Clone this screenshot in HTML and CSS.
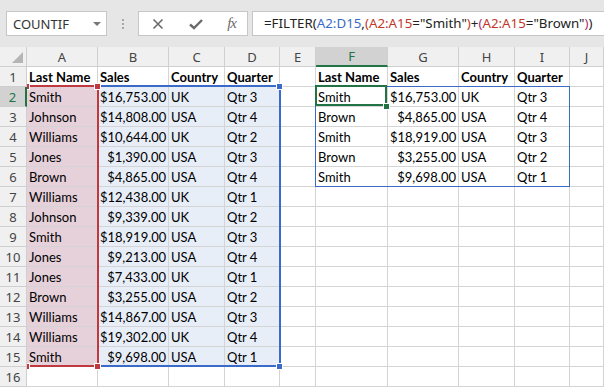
FILE: index.html
```html
<!DOCTYPE html>
<html>
<head>
<meta charset="utf-8">
<link rel="stylesheet" href="styles.css">
</head>
<body>
<div class="toolbar">
  <div class="namebox"><span class="nb-text">COUNTIF</span><span class="nb-arrow"></span></div>
  <div class="grip"><i></i><i></i><i></i></div>
  <div class="fxbox">
    <svg class="ico" width="14" height="14" viewBox="0 0 14 14"><path d="M2.5 2.5 L11.5 11.5 M11.5 2.5 L2.5 11.5" stroke="#6b6b6b" stroke-width="1.6" fill="none"/></svg>
    <svg class="ico" width="16" height="14" viewBox="0 0 16 14"><path d="M2 7.5 L6 11 L14 3" stroke="#6b6b6b" stroke-width="2.4" fill="none"/></svg>
    <span class="fx">fx</span>
  </div>
  <div class="formula"><span>=FILTER(</span><span class="fb">A2:D15</span><span>,</span><span class="fr">(A2:A15</span><span>="Smith"</span><span class="fr">)</span><span>+</span><span class="fp">(</span><span class="fr">A2:A15</span><span>="Brown"</span><span class="fp">)</span><span>)</span></div>
</div>
<div class="sheet">
  <div class="corner"><span class="tri"></span></div>
  <div class="ch">A</div><div class="ch">B</div><div class="ch">C</div><div class="ch">D</div><div class="ch">E</div><div class="ch sel">F</div><div class="ch">G</div><div class="ch">H</div><div class="ch">I</div><div class="ch">J</div>

  <div class="rh">1</div><div class="c b">Last Name</div><div class="c b">Sales</div><div class="c b">Country</div><div class="c b">Quarter</div><div class="c"></div><div class="c b">Last Name</div><div class="c b">Sales</div><div class="c b">Country</div><div class="c b">Quarter</div><div class="c"></div>
  <div class="rh rsel">2</div><div class="c pk">Smith</div><div class="c bl r">$16,753.00</div><div class="c bl">UK</div><div class="c bl">Qtr 3</div><div class="c"></div><div class="c">Smith</div><div class="c r">$16,753.00</div><div class="c">UK</div><div class="c">Qtr 3</div><div class="c"></div>
  <div class="rh">3</div><div class="c pk">Johnson</div><div class="c bl r">$14,808.00</div><div class="c bl">USA</div><div class="c bl">Qtr 4</div><div class="c"></div><div class="c">Brown</div><div class="c r">$4,865.00</div><div class="c">USA</div><div class="c">Qtr 4</div><div class="c"></div>
  <div class="rh">4</div><div class="c pk">Williams</div><div class="c bl r">$10,644.00</div><div class="c bl">UK</div><div class="c bl">Qtr 2</div><div class="c"></div><div class="c">Smith</div><div class="c r">$18,919.00</div><div class="c">USA</div><div class="c">Qtr 3</div><div class="c"></div>
  <div class="rh">5</div><div class="c pk">Jones</div><div class="c bl r">$1,390.00</div><div class="c bl">USA</div><div class="c bl">Qtr 3</div><div class="c"></div><div class="c">Brown</div><div class="c r">$3,255.00</div><div class="c">USA</div><div class="c">Qtr 2</div><div class="c"></div>
  <div class="rh">6</div><div class="c pk">Brown</div><div class="c bl r">$4,865.00</div><div class="c bl">USA</div><div class="c bl">Qtr 4</div><div class="c"></div><div class="c">Smith</div><div class="c r">$9,698.00</div><div class="c">USA</div><div class="c">Qtr 1</div><div class="c"></div>
  <div class="rh">7</div><div class="c pk">Williams</div><div class="c bl r">$12,438.00</div><div class="c bl">UK</div><div class="c bl">Qtr 1</div><div class="c"></div><div class="c"></div><div class="c"></div><div class="c"></div><div class="c"></div><div class="c"></div>
  <div class="rh">8</div><div class="c pk">Johnson</div><div class="c bl r">$9,339.00</div><div class="c bl">UK</div><div class="c bl">Qtr 2</div><div class="c"></div><div class="c"></div><div class="c"></div><div class="c"></div><div class="c"></div><div class="c"></div>
  <div class="rh">9</div><div class="c pk">Smith</div><div class="c bl r">$18,919.00</div><div class="c bl">USA</div><div class="c bl">Qtr 3</div><div class="c"></div><div class="c"></div><div class="c"></div><div class="c"></div><div class="c"></div><div class="c"></div>
  <div class="rh">10</div><div class="c pk">Jones</div><div class="c bl r">$9,213.00</div><div class="c bl">USA</div><div class="c bl">Qtr 4</div><div class="c"></div><div class="c"></div><div class="c"></div><div class="c"></div><div class="c"></div><div class="c"></div>
  <div class="rh">11</div><div class="c pk">Jones</div><div class="c bl r">$7,433.00</div><div class="c bl">UK</div><div class="c bl">Qtr 1</div><div class="c"></div><div class="c"></div><div class="c"></div><div class="c"></div><div class="c"></div><div class="c"></div>
  <div class="rh">12</div><div class="c pk">Brown</div><div class="c bl r">$3,255.00</div><div class="c bl">USA</div><div class="c bl">Qtr 2</div><div class="c"></div><div class="c"></div><div class="c"></div><div class="c"></div><div class="c"></div><div class="c"></div>
  <div class="rh">13</div><div class="c pk">Williams</div><div class="c bl r">$14,867.00</div><div class="c bl">USA</div><div class="c bl">Qtr 3</div><div class="c"></div><div class="c"></div><div class="c"></div><div class="c"></div><div class="c"></div><div class="c"></div>
  <div class="rh">14</div><div class="c pk">Williams</div><div class="c bl r">$19,302.00</div><div class="c bl">UK</div><div class="c bl">Qtr 4</div><div class="c"></div><div class="c"></div><div class="c"></div><div class="c"></div><div class="c"></div><div class="c"></div>
  <div class="rh">15</div><div class="c pk">Smith</div><div class="c bl r">$9,698.00</div><div class="c bl">USA</div><div class="c bl">Qtr 1</div><div class="c"></div><div class="c"></div><div class="c"></div><div class="c"></div><div class="c"></div><div class="c"></div>
  <div class="rh">16</div><div class="c"></div><div class="c"></div><div class="c"></div><div class="c"></div><div class="c"></div><div class="c"></div><div class="c"></div><div class="c"></div><div class="c"></div><div class="c"></div>

  <div class="range blue-range"></div>
  <div class="range red-range"></div>
  <div class="handle hb" style="left:276px;top:36px"></div>
  <div class="handle hb" style="left:276px;top:316px"></div>
  <div class="handle hr" style="left:94px;top:36px"></div>
  <div class="handle hr" style="left:94px;top:316px"></div>
  <div class="handle hr hl" style="left:27px;top:36px"></div>
  <div class="handle hr hl" style="left:27px;top:316px"></div>
  <div class="spill"></div>
  <div class="active"></div>
  <div class="handle hg" style="left:383px;top:56px"></div>
</div>
</body>
</html>
```
FILE: styles.css
```css
html, body {
  margin: 0;
  padding: 0;
  background: #ffffff;
  overflow: hidden;
}
body {
  width: 604px;
  height: 387px;
  font-family: "Lato", "Liberation Sans", sans-serif;
}
.toolbar {
  height: 47px;
  background: #e6e6e6;
  display: flex;
  align-items: flex-start;
  padding: 11px 0 0 6px;
  box-sizing: border-box;
}
.namebox {
  width: 101px;
  height: 25px;
  box-sizing: border-box;
  background: #fff;
  border: 1px solid #c6c6c6;
  display: flex;
  align-items: center;
  justify-content: space-between;
  padding: 0 5px 0 6px;
  font-family: "Noto Sans", "Open Sans", sans-serif;
  font-size: 13px;
  color: #333;
}
.nb-arrow {
  width: 0;
  height: 0;
  border-left: 4px solid transparent;
  border-right: 4px solid transparent;
  border-top: 4px solid #777;
}
.grip {
  width: 31px;
  height: 25px;
  display: flex;
  flex-direction: column;
  align-items: center;
  justify-content: center;
  gap: 2px;
}
.grip i {
  display: block;
  width: 2px;
  height: 2px;
  background: #a8a8a8;
}
.fxbox {
  width: 110px;
  height: 25px;
  box-sizing: border-box;
  background: #fff;
  border: 1px solid #c6c6c6;
  display: flex;
  align-items: center;
  justify-content: space-between;
  padding: 0 11px 0 12px;
}
.fx {
  font-family: "Liberation Serif", serif;
  font-style: italic;
  font-size: 15px;
  color: #6b6b6b;
  letter-spacing: -1px;
}
.formula {
  flex: 1;
  margin-left: 4px;
  height: 25px;
  box-sizing: border-box;
  background: #fff;
  border: 1px solid #c6c6c6;
  border-right: none;
  padding-left: 11px;
  font-family: "Noto Sans", "Open Sans", sans-serif;
  font-size: 13.3px;
  line-height: 23px;
  color: #222;
  white-space: nowrap;
}
.fb { color: #3a6bc8; }
.fr { color: #c0392b; }
.fp { color: #b03070; }

.sheet {
  position: relative;
  display: grid;
  grid-template-columns: 27px 71px 71px 56px 55px 36px 72px 71px 56px 55px 34px;
  grid-auto-rows: 20px;
}
.corner, .ch, .rh {
  background: #f0f0f0;
  box-sizing: border-box;
  border-right: 1px solid #cfcfcf;
  border-bottom: 1px solid #cfcfcf;
  font-family: "Noto Sans", "Open Sans", sans-serif;
  font-size: 13px;
  color: #444;
  display: flex;
  align-items: center;
  justify-content: center;
}
.corner {
  position: relative;
}
.tri {
  position: absolute;
  right: 3px;
  bottom: 3px;
  width: 0;
  height: 0;
  border-left: 11px solid transparent;
  border-bottom: 11px solid #b5b5b5;
}
.ch.sel {
  background: #d2d2d2;
  border-bottom: 2px solid #217346;
  color: #217346;
}
.rh.rsel {
  background: #d2d2d2;
  border-right: 2px solid #217346;
  color: #217346;
}
.c {
  box-sizing: border-box;
  border-right: 1px solid #d4d4d4;
  border-bottom: 1px solid #d4d4d4;
  font-size: 13px;
  color: #000;
  padding: 0 2px 0 2px;
  line-height: 21px;
  white-space: nowrap;
  overflow: hidden;
}
.c.b { font-weight: bold; }
.c.r { text-align: right; }
.c.pk { background: #e6d0da; }
.c.bl { background: #e8eef8; }

.range {
  position: absolute;
  top: 38px;
  height: 282px;
  box-sizing: border-box;
}
.red-range {
  left: 27px;
  width: 72px;
  border: 2px solid #c0393f;
  border-left: none;
}
.blue-range {
  left: 97px;
  width: 184px;
  border: 2px solid #3a6bc8;
}
.handle {
  position: absolute;
  width: 5px;
  height: 5px;
  border: 1px solid #fff;
}
.hr { background: #c0393f; }
.hb { background: #3a6bc8; }
.hg { background: #217346; }
.hl { width: 2px; border-left: none; }
.spill {
  position: absolute;
  left: 315px;
  top: 39px;
  width: 255px;
  height: 101px;
  box-sizing: border-box;
  border: 1px solid #3a6bc8;
}
.active {
  position: absolute;
  left: 315px;
  top: 38px;
  width: 72px;
  height: 21px;
  box-sizing: border-box;
  border: 2px solid #217346;
}
```
